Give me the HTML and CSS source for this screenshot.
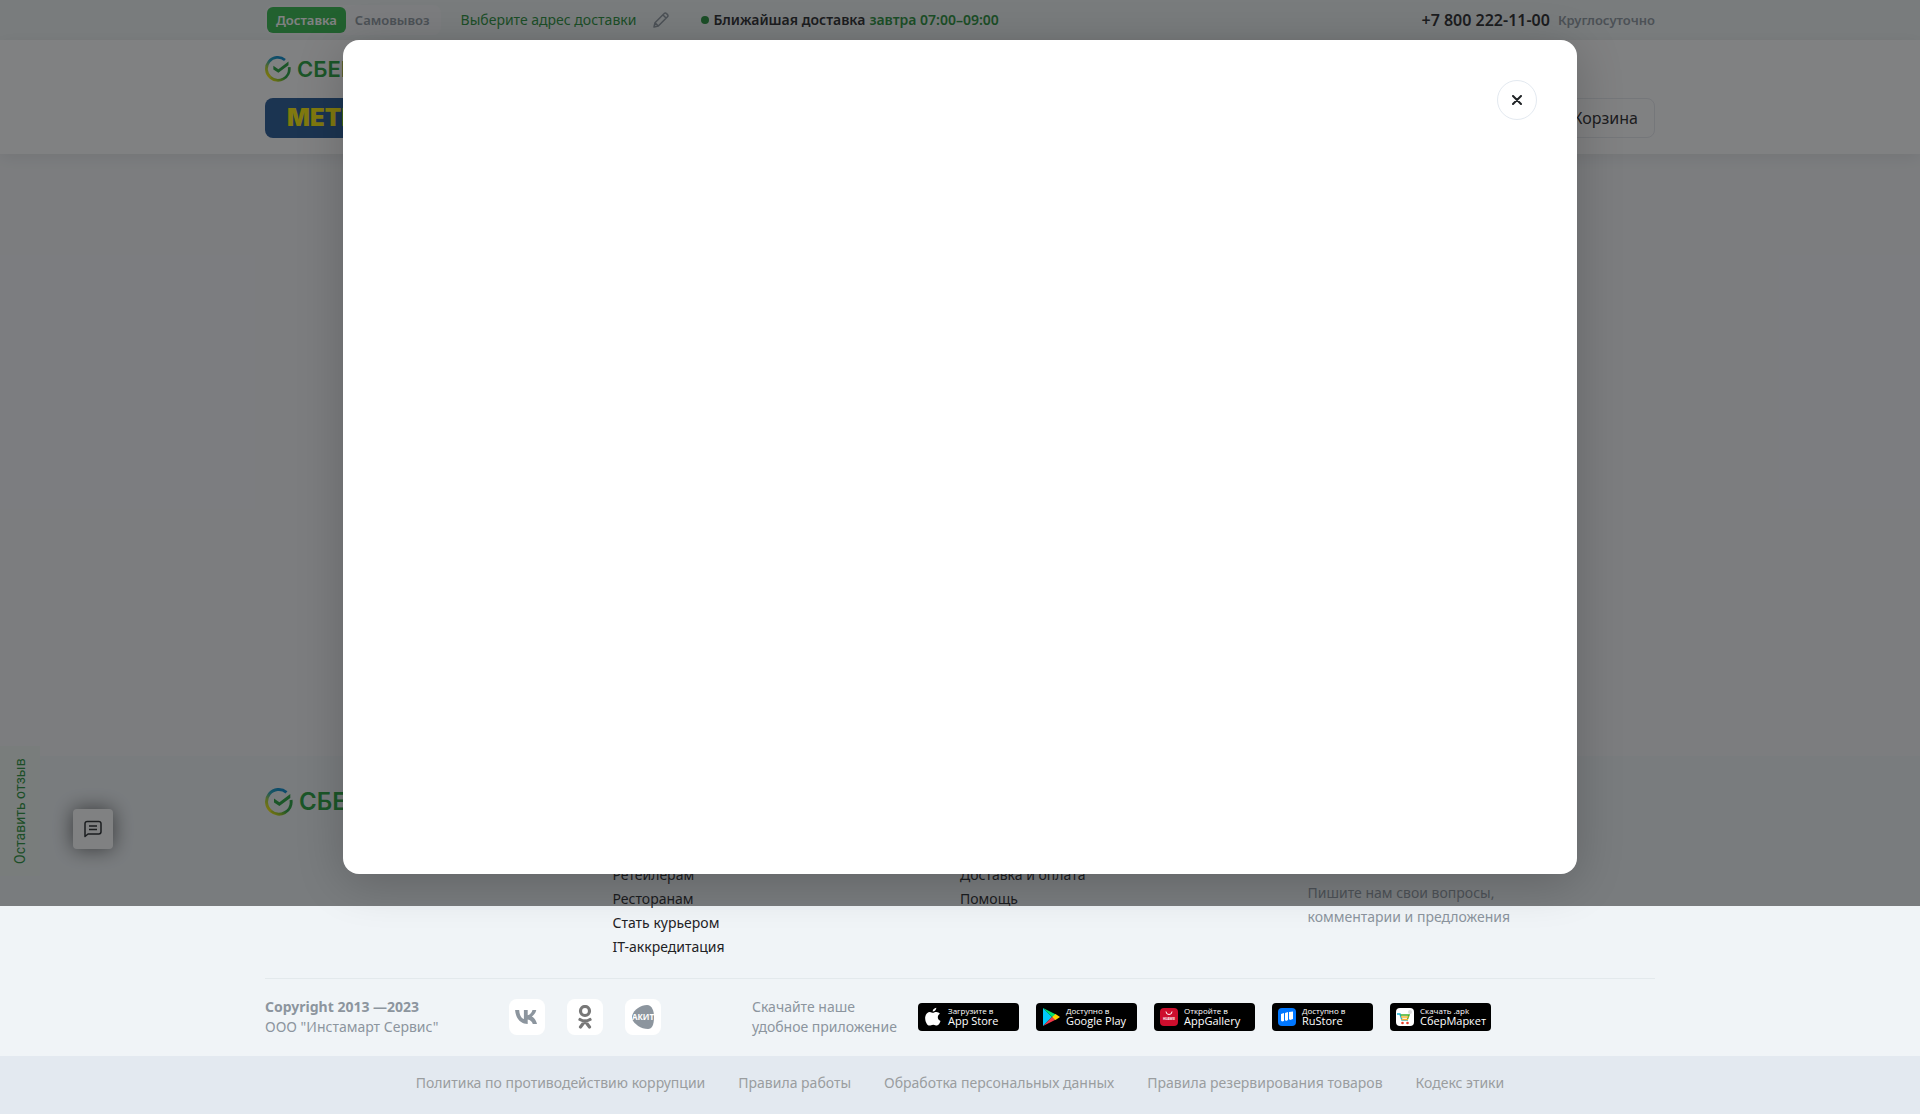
FILE: index.html
```html
<!DOCTYPE html>
<html lang="ru">
<head>
<meta charset="utf-8">
<meta name="viewport" content="width=device-width, initial-scale=1">
<title>СберМаркет</title>
<link rel="stylesheet" href="styles.css">
</head>
<body>
<svg class="sprite" aria-hidden="true">
  <defs>
    <linearGradient id="ring" x1="0.2" y1="1" x2="0.75" y2="0">
      <stop offset="0" stop-color="#f2e600"/>
      <stop offset="0.35" stop-color="#9fcf3a"/>
      <stop offset="0.65" stop-color="#1ba0b8"/>
      <stop offset="1" stop-color="#0087cd"/>
    </linearGradient>
    <linearGradient id="ring-end" x1="0" y1="1" x2="1" y2="0">
      <stop offset="0" stop-color="#f2e600"/>
      <stop offset="0.5" stop-color="#21a038"/>
    </linearGradient>
    <symbol id="sber" viewBox="0 0 28 28">
      <path d="M6 23.2A12.2 12.2 0 0 1 21.5 4.3" fill="none" stroke="url(#ring)" stroke-width="3"/>
      <path d="M26 12A12.2 12.2 0 0 1 5.8 23" fill="none" stroke="url(#ring-end)" stroke-width="3"/>
      <path d="M9 10.6l5.4 3.6L25.3 6v4L14.4 18 9 14.6z" fill="#21a038"/>
    </symbol>
  </defs>
</svg>

<div class="topbar">
  <div class="container topbar-row">
    <div class="toggle">
      <button class="toggle-item active" type="button">Доставка</button>
      <button class="toggle-item" type="button">Самовывоз</button>
    </div>
    <button class="address" type="button">Выберите адрес доставки
      <svg width="18" height="18" viewBox="0 0 18 18" fill="none" stroke="#8c959e" stroke-width="1.5" stroke-linejoin="round"><path d="M2 16l1-4.300L12.200 2.500a1.500 1.500 0 0 1 2.200 0l1.100 1.100a1.500 1.500 0 0 1 0 2.200L6.300 15zM11 4l3 3M3 11.700L6.300 15"/></svg>
    </button>
    <p class="slot"><span class="dot"></span>Ближайшая доставка <span class="green">завтра 07:00–09:00</span></p>
    <p class="phone"><a href="tel:+78002221100">+7 800 222-11-00</a><span>Круглосуточно</span></p>
  </div>
</div>

<header class="header">
  <div class="container">
    <a class="logo" href="#"><svg width="26" height="26"><use href="#sber"/></svg>СБЕРМАРКЕТ</a>
    <div class="header-row">
      <a class="metro" href="#">METRO</a>
      <button class="cart" type="button">Корзина</button>
    </div>
  </div>
</header>

<main class="main"></main>

<footer class="footer">
  <div class="container">
    <div class="columns">
      <a class="logo large" href="#"><svg width="28" height="28"><use href="#sber"/></svg>СБЕРМАРКЕТ</a>
      <ul class="links">
        <li><a href="#">Ретейлерам</a></li>
        <li><a href="#">Ресторанам</a></li>
        <li><a href="#">Стать курьером</a></li>
        <li><a href="#">IT-аккредитация</a></li>
      </ul>
      <ul class="links">
        <li><a href="#">Доставка и оплата</a></li>
        <li><a href="#">Помощь</a></li>
      </ul>
      <p class="contact">Пишите нам свои вопросы,<br>комментарии и предложения</p>
    </div>
    <div class="legal">
      <p class="copyright"><b>Copyright 2013 —2023</b><br>ООО "Инстамарт Сервис"</p>
      <div class="socials">
        <a href="#" aria-label="ВКонтакте"><svg width="24" height="24" viewBox="0 0 24 24" fill="#8c959e"><path d="M13 19C5.300 19 .8 13.500.1 5h4.100c.2 6 2.700 8.500 4.700 9V5h3.800v5.200c2-.2 4.100-2.600 4.800-5.200h3.800c-.6 3.200-2.900 5.600-4.500 6.600 1.600.8 4.100 2.900 5.200 7.400h-4.200c-.7-2.400-2.700-4.200-5.100-4.500V19z"/></svg></a>
        <a href="#" aria-label="Одноклассники"><svg width="24" height="24" viewBox="0 0 24 24" fill="none" stroke="#777" stroke-width="3.200" stroke-linecap="round" stroke-linejoin="round"><circle cx="12" cy="6" r="4.500"/><path d="M7 14.500q5 3 10 0M12 16l-4.500 6M12 16l4.500 6"/></svg></a>
        <a href="#" aria-label="АКИТ"><svg width="24" height="24" viewBox="0 0 24 24"><path d="M1 11C3 4 10 0 16 0c5 0 7 6 7 12 0 8-2 12-6 12C10 24 3 19 1 14z" fill="#8c959e"/><text x="12" y="15" text-anchor="middle" class="akit">АКИТ</text></svg></a>
      </div>
      <p class="apps-text">Скачайте наше<br>удобное приложение</p>
      <div class="apps">
        <a href="#"><svg width="18" height="20" viewBox="-1 0 18 20" fill="#fff"><path d="M8 5.800c1-.2 2-.9 3.400-.9 1.500.1 2.700.7 3.500 1.900-3.200 2-2.500 6 .6 7.200-.6 1.700-1.900 4.500-3.600 4.600-1.500 0-1.900-.8-3.700-.8s-2.300.8-3.700.8C1.800 18.600-.2 13.500.2 10 .7 6.400 3 4.900 4.800 4.900c1.300 0 2.300.8 3.200.9zM11.300.7c.2 2-1.600 3.900-3.600 3.900C7.500 2.700 9.300.9 11.300.7z"/></svg><span><small>Загрузите в</small>App Store</span></a>
        <a href="#"><svg width="18" height="20" viewBox="0 0 18 20"><path d="M1 1v18L10 10z" fill="#00c8f8"/><path d="M1 1l13 6.500L10 10z" fill="#00e070"/><path d="M1 19l13-6.500L10 10z" fill="#f03848"/><path d="M13.500 7L18 10l-4.500 3L10 10z" fill="#ffd000"/></svg><span><small>Доступно в</small>Google Play</span></a>
        <a href="#"><svg width="18" height="18" viewBox="0 0 18 18"><rect width="18" height="18" rx="4" fill="#ce0e2d"/><path d="M6 3.500a3 3 0 0 0 6 0" fill="none" stroke="#fff"/><text x="9" y="12" text-anchor="middle" class="huawei">HUAWEI</text></svg><span><small>Откройте в</small>AppGallery</span></a>
        <a href="#"><svg width="18" height="18" viewBox="0 0 18 18"><rect width="18" height="18" rx="4" fill="#0077ff"/><path d="M3 6l3-1v8l-2 .5-1-1zM7 5l3-1v8l-2 1-1-1zM11 4l4-.5V11l-3 1-1-1z" fill="#fff"/></svg><span><small>Доступно в</small>RuStore</span></a>
        <a href="#"><svg width="18" height="18" viewBox="0 0 18 18"><rect width="18" height="18" rx="4" fill="#fff"/><circle cx="14" cy="4" r="2" fill="#ddd"/><path d="M1 6h3l2 6h6" fill="none" stroke="#1cb5d8" stroke-width="1.500"/><path d="M4.500 7H13l-1.500 4" fill="none" stroke="#43b02a" stroke-width="1.500"/><path d="M5 9h7.500M5.500 11.500H12" stroke="#f9b233" stroke-width="1.500"/><circle cx="6.500" cy="15" r="1.300" fill="#e8412a"/><circle cx="11.500" cy="15" r="1.300" fill="#e8412a"/></svg><span><small>Скачать .apk</small>СберМаркет</span></a>
      </div>
    </div>
  </div>
  <nav class="policies">
    <a href="#">Политика по противодействию коррупции</a>
    <a href="#">Правила работы</a>
    <a href="#">Обработка персональных данных</a>
    <a href="#">Правила резервирования товаров</a>
    <a href="#">Кодекс этики</a>
  </nav>
</footer>

<button class="feedback" type="button">Оставить отзыв</button>
<button class="chat" type="button" aria-label="Чат"><svg width="18" height="18" viewBox="0 0 18 18" fill="none" stroke="#1f2225" stroke-width="1.500" stroke-linejoin="round"><path d="M1 16.500V3.500A2.200 2.200 0 0 1 3.200 1.500h11.600A2.200 2.200 0 0 1 17 3.500v8.300A2.200 2.200 0 0 1 14.800 14H4z"/><path d="M5 6h8M5 9.500h8"/></svg></button>

<div class="overlay">
  <div class="modal" role="dialog" aria-modal="true">
    <button class="close" type="button" aria-label="Закрыть"><svg width="10" height="10" viewBox="0 0 10 10" stroke="#1f2225" stroke-width="2" stroke-linecap="round"><path d="M1 1l8 8M9 1L1 9"/></svg></button>
  </div>
</div>
</body>
</html>
```
FILE: styles.css
```css
* { box-sizing: border-box; }

body {
  margin: 0;
  position: relative;
  background: #f6f7f9;
  color: #1f2225;
  font: 14px/24px "Noto Sans", sans-serif;
}

p, ul { margin: 0; padding: 0; list-style: none; }
a { color: inherit; text-decoration: none; }
button { border: 0; padding: 0; background: none; color: inherit; font: inherit; }
.sprite { position: absolute; width: 0; height: 0; }
.green { color: #1f8f35; }

.container { max-width: 1422px; margin: 0 auto; padding: 0 16px; }

.topbar { background: #f0f4f4; }
.topbar-row { display: flex; align-items: center; height: 40px; font-weight: 600; }
.toggle { display: flex; padding: 2px; border-radius: 8px; background: #f5f6f8; font-size: 13px; }
.toggle-item { height: 26px; padding: 0 9px; border-radius: 6px; color: #8c959e; }
.toggle-item.active { background: #2fb848; color: #fff; }
.address { display: flex; align-items: center; gap: 16px; margin-left: 20px; color: #1f8f35; font-weight: 400; }
.slot { display: flex; align-items: center; gap: 4px; margin-left: 31px; }
.dot { width: 8px; height: 8px; border-radius: 50%; background: #1f8f35; }
.phone { display: flex; gap: 8px; margin-left: auto; color: #8c959e; font-size: 13px; }
.phone a { color: #1f2225; font-size: 16px; }

.header { position: relative; padding: 16px 0; background: #fff; box-shadow: 0 4px 16px rgba(0, 0, 0, 0.08); }
.logo { display: flex; align-items: center; gap: 6px; height: 26px; color: #21a038; font: 600 22px/26px Inter, sans-serif; }
.logo.large { height: 28px; font-size: 24px; }
.header-row { display: flex; justify-content: space-between; margin-top: 16px; }
.metro { width: 144px; height: 40px; padding-left: 22px; border-radius: 8px; background: #205493; color: #ffed00; font: 900 24px/40px Inter, sans-serif; }
.cart { height: 40px; padding: 0 16px 0 48px; border: 1px solid #e6e8ee; border-radius: 8px; font-size: 16px; }

.main { min-height: 602px; }

.footer { background: #f0f4f7; }
.columns { display: grid; grid-template-columns: repeat(4, 1fr); padding: 32px 0 19px; }
.links { padding-top: 75px; }
.contact { padding-top: 93px; color: #8c959e; }
.legal { display: flex; align-items: center; border-top: 1px solid #e3e9ec; height: 78px; color: #8c959e; line-height: 20px; padding-bottom: 2px; }
.copyright { width: 244px; }
.socials { display: flex; gap: 22px; }
.socials a { display: grid; place-items: center; width: 36px; height: 36px; border-radius: 8px; background: #fff; }
.akit { font: 700 8px "Open Sans", sans-serif; fill: #fff; }
.apps-text { width: 166px; margin-left: 91px; }
.apps { display: flex; gap: 17px; }
.apps a { display: flex; align-items: center; gap: 6px; width: 101px; height: 28px; padding-left: 6px; border-radius: 4px; background: #000; color: #fff; font: 500 11px/12px "Open Sans", sans-serif; white-space: nowrap; }
.apps svg { flex: none; }
.apps small { display: block; font-size: 8px; line-height: 8px; font-weight: 400; }
.huawei { font: 700 3px "Open Sans", sans-serif; fill: #fff; }
.policies { display: flex; flex-wrap: wrap; justify-content: center; gap: 0 33px; padding: 15px 16px 19px; background: #e3e9f0; color: #9a9d9f; }

.feedback { position: absolute; left: 0; top: 746px; width: 40px; height: 130px; background: #f0f6f2; color: #1f8f35; font: 14px/40px Roboto, sans-serif; writing-mode: vertical-rl; transform: rotate(180deg); }
.chat { position: absolute; left: 73px; top: 809px; display: grid; place-items: center; width: 40px; height: 40px; border-radius: 4px; background: #fff; box-shadow: 0 0 20px rgba(0, 0, 0, 0.6); }

.overlay { position: absolute; top: 0; left: 0; right: 0; padding: 40px 32px 32px; background: rgba(24, 25, 28, 0.55); }
.modal { display: flex; justify-content: flex-end; align-items: flex-start; max-width: 1234px; min-height: 834px; margin: 0 auto; padding: 40px; border-radius: 16px; background: #fff; box-shadow: 0 8px 48px rgba(0, 0, 0, 0.2); }
.close { display: grid; place-items: center; width: 40px; height: 40px; border: 1px solid #e3e9f0; border-radius: 50%; }
```
